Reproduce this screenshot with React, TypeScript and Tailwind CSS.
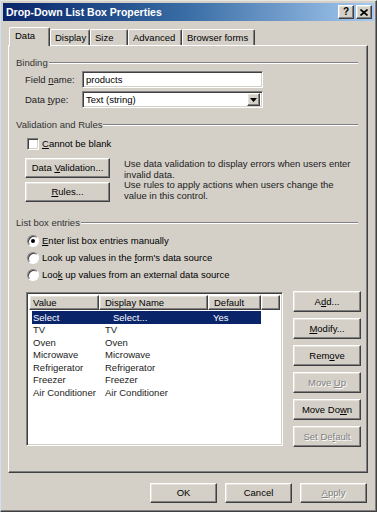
import React from "react";

const raised =
  "border border-t-white border-l-white border-r-[#404040] border-b-[#404040] shadow-[inset_-1px_-1px_0_#808080,inset_1px_1px_0_#e6e3dc]";
const sunken =
  "border border-t-[#808080] border-l-[#808080] border-r-white border-b-white shadow-[inset_1px_1px_0_#404040,inset_-1px_-1px_0_#d4d0c8]";
const disabledText = "text-[#808080] [text-shadow:1px_1px_0_#ffffff]";

function U({ c }: { c: string }) {
  return <span className="underline underline-offset-[1px]">{c}</span>;
}

function Btn({
  children,
  className = "",
  disabled = false,
}: {
  children: React.ReactNode;
  className?: string;
  disabled?: boolean;
}) {
  return (
    <div
      className={`flex items-center justify-center bg-[#d4d0c8] ${raised} ${
        disabled ? disabledText : "text-black"
      } ${className}`}
    >
      <span>{children}</span>
    </div>
  );
}

function Group({ title, className = "" }: { title: string; className?: string }) {
  return (
    <div className={`flex h-[13px] items-center pl-[7px] pr-[9px] ${className}`}>
      <span className="text-[#333]">{title}</span>
      <div className="ml-[1px] h-[2px] flex-1 border-t border-b border-t-[#808080] border-b-white" />
    </div>
  );
}

function Radio({ checked = false }: { checked?: boolean }) {
  return (
    <div className="flex h-[12px] w-[12px] items-center justify-center rounded-full border border-t-[#808080] border-l-[#808080] border-r-white border-b-white bg-white shadow-[inset_1px_1px_0_#404040]">
      {checked && <div className="h-[4px] w-[4px] rounded-full bg-black" />}
    </div>
  );
}

const rows = [
  ["TV", "TV"],
  ["Oven", "Oven"],
  ["Microwave", "Microwave"],
  ["Refrigerator", "Refrigerator"],
  ["Freezer", "Freezer"],
  ["Air Conditioner", "Air Conditioner"],
];

const tabs = [
  { label: "Display", w: "w-[40px]" },
  { label: "Size", w: "w-[38px]" },
  { label: "Advanced", w: "w-[54px]" },
  { label: "Browser forms", w: "w-[73px]" },
];

export default function App() {
  return (
    <div className="h-[512px] w-[377px] overflow-hidden border border-t-[#e8e6e0] border-l-[#cfe0f4] border-r-[#404040] border-b-[#404040] bg-[#d4d0c8] font-['Liberation_Sans',Arial,sans-serif] text-[9.5px] leading-none text-black shadow-[inset_-1px_-1px_0_#808080]">
      {/* title bar */}
      <div className="ml-[2px] mt-[2px] flex h-[18px] w-[371px] items-center bg-gradient-to-r from-[#0a246a] via-[#3a6ea5] to-[#a6caf0] pl-[3px] pr-[2px]">
        <span className="flex-1 text-[10.5px] font-bold text-white">
          Drop-Down List Box Properties
        </span>
        <div className={`flex h-[14px] w-[16px] items-center justify-center bg-[#d4d0c8] text-[10px] font-bold ${raised}`}>
          ?
        </div>
        <div className={`ml-[2px] flex h-[14px] w-[16px] items-center justify-center bg-[#d4d0c8] ${raised}`}>
          <svg width="8" height="7" viewBox="0 0 8 7">
            <path d="M0.5 0.5 L7.5 6.5 M7.5 0.5 L0.5 6.5" stroke="#000" strokeWidth="1.6" />
          </svg>
        </div>
      </div>

      {/* tabs */}
      <div className="ml-[8px] mt-[6px] flex h-[18px] items-end">
        <div className="relative z-10 -mb-px flex h-[19px] w-[41px] items-center rounded-t-[2px] border-l border-t border-r border-l-white border-t-white border-r-[#404040] bg-[#d4d0c8] pb-[2px] pl-[5px] shadow-[inset_-1px_0_0_#808080]">
          Data
        </div>
        {tabs.map((t) => (
          <div
            key={t.label}
            className={`flex h-[16px] ${t.w} items-center rounded-t-[2px] border-l border-t border-r border-l-white border-t-white border-r-[#404040] pl-[4px] shadow-[inset_-1px_0_0_#808080]`}
          >
            {t.label}
          </div>
        ))}
      </div>

      {/* tab panel */}
      <div className="ml-[7px] flex h-[428px] w-[360px] flex-col border border-t-white border-l-white border-r-[#404040] border-b-[#404040] shadow-[inset_-1px_-1px_0_#808080]">
        <Group title="Binding" className="mt-[10px]" />
        <div className="mt-[2px] flex h-[17px] items-center pl-[16px]">
          <span className="w-[57px] text-[#222]">
            Field <U c="n" />ame:
          </span>
          <div className={`flex h-[17px] w-[181px] items-center bg-white pl-[3px] ${sunken}`}>
            products
          </div>
        </div>
        <div className="mt-[3px] flex h-[17px] items-center pl-[16px]">
          <span className="w-[57px] text-[#222]">
            Data <U c="t" />ype:
          </span>
          <div className={`flex h-[17px] w-[181px] items-center bg-white pl-[3px] ${sunken}`}>
            <span className="flex-1">Text (string)</span>
            <div className={`mr-[2px] flex h-[13px] w-[13px] items-center justify-center bg-[#d4d0c8] ${raised}`}>
              <svg width="7" height="4" viewBox="0 0 7 4">
                <path d="M0 0 H7 L3.5 4 Z" fill="#000" />
              </svg>
            </div>
          </div>
        </div>

        <Group title="Validation and Rules" className="mt-[10px]" />
        <div className="mt-[6px] flex h-[13px] items-center pl-[18px]">
          <div className={`h-[12px] w-[12px] bg-white ${sunken}`} />
          <span className="ml-[3px]">
            <U c="C" />annot be blank
          </span>
        </div>
        <div className="mt-[8px] flex items-start pl-[16px]">
          <Btn className="h-[20px] w-[85px]">
            Data <U c="V" />alidation...
          </Btn>
          <div className="ml-[14px] mt-[1px] leading-[10.5px] text-[#222]">
            Use data validation to display errors when users enter
            <br />
            invalid data.
          </div>
        </div>
        <div className="mt-[2px] flex items-start pl-[16px]">
          <Btn className="h-[20px] w-[85px]">
            <U c="R" />ules...
          </Btn>
          <div className="ml-[14px] mt-[-2px] leading-[10.5px] text-[#222]">
            Use rules to apply actions when users change the
            <br />
            value in this control.
          </div>
        </div>

        <Group title="List box entries" className="mt-[14px]" />
        <div className="mt-[5px] flex h-[13px] items-center pl-[18px]">
          <Radio checked />
          <span className="ml-[3px]">
            <U c="E" />nter list box entries manually
          </span>
        </div>
        <div className="mt-[4px] flex h-[13px] items-center pl-[18px]">
          <Radio />
          <span className="ml-[3px]">
            Look up values in the <U c="f" />orm's data source
          </span>
        </div>
        <div className="mt-[4px] flex h-[13px] items-center pl-[18px]">
          <Radio />
          <span className="ml-[3px]">
            Loo<U c="k" /> up values from an external data source
          </span>
        </div>

        <div className="mt-[11px] flex pl-[17px]">
          <div className={`flex h-[154px] w-[257px] flex-col bg-white p-[2px] ${sunken}`}>
            <div className="flex h-[15px] bg-[#d4d0c8]">
              <div className={`flex w-[70px] items-center pl-[3px] ${raised}`}>Value</div>
              <div className={`flex w-[109px] items-center pl-[5px] ${raised}`}>Display Name</div>
              <div className={`flex w-[53px] items-center pl-[5px] ${raised}`}>Default</div>
              <div className={`flex-1 ${raised}`} />
            </div>
            <div className="mt-[1px] flex h-[12.5px] items-center">
              <div className="ml-[3px] flex h-full w-[229px] items-center bg-[#0a246a] text-white">
                <span className="w-[81px] pl-[1px]">Select</span>
                <span className="w-[100px]">Select...</span>
                <span>Yes</span>
              </div>
            </div>
            {rows.map(([v, d]) => (
              <div key={v} className="flex h-[12.5px] items-center text-[#222]">
                <span className="w-[76px] pl-[4px]">{v}</span>
                <span>{d}</span>
              </div>
            ))}
          </div>

          <div className="ml-[10px] mt-[-1px] flex flex-col gap-[6px]">
            <Btn className="h-[21px] w-[68px]">
              A<U c="d" />d...
            </Btn>
            <Btn className="h-[21px] w-[68px]">
              <U c="M" />odify...
            </Btn>
            <Btn className="h-[21px] w-[68px]">
              Rem<U c="o" />ve
            </Btn>
            <Btn className="h-[21px] w-[68px]" disabled>
              Move <U c="U" />p
            </Btn>
            <Btn className="h-[21px] w-[68px]">
              Move Do<U c="w" />n
            </Btn>
            <Btn className="h-[21px] w-[68px]" disabled>
              Set De<U c="f" />ault
            </Btn>
          </div>
        </div>
      </div>

      {/* dialog buttons */}
      <div className="mt-[10px] flex justify-end gap-[8px] pr-[9px]">
        <Btn className="h-[20px] w-[67px]">OK</Btn>
        <Btn className="h-[20px] w-[67px]">Cancel</Btn>
        <Btn className="h-[20px] w-[67px]" disabled>
          <U c="A" />pply
        </Btn>
      </div>
    </div>
  );
}
